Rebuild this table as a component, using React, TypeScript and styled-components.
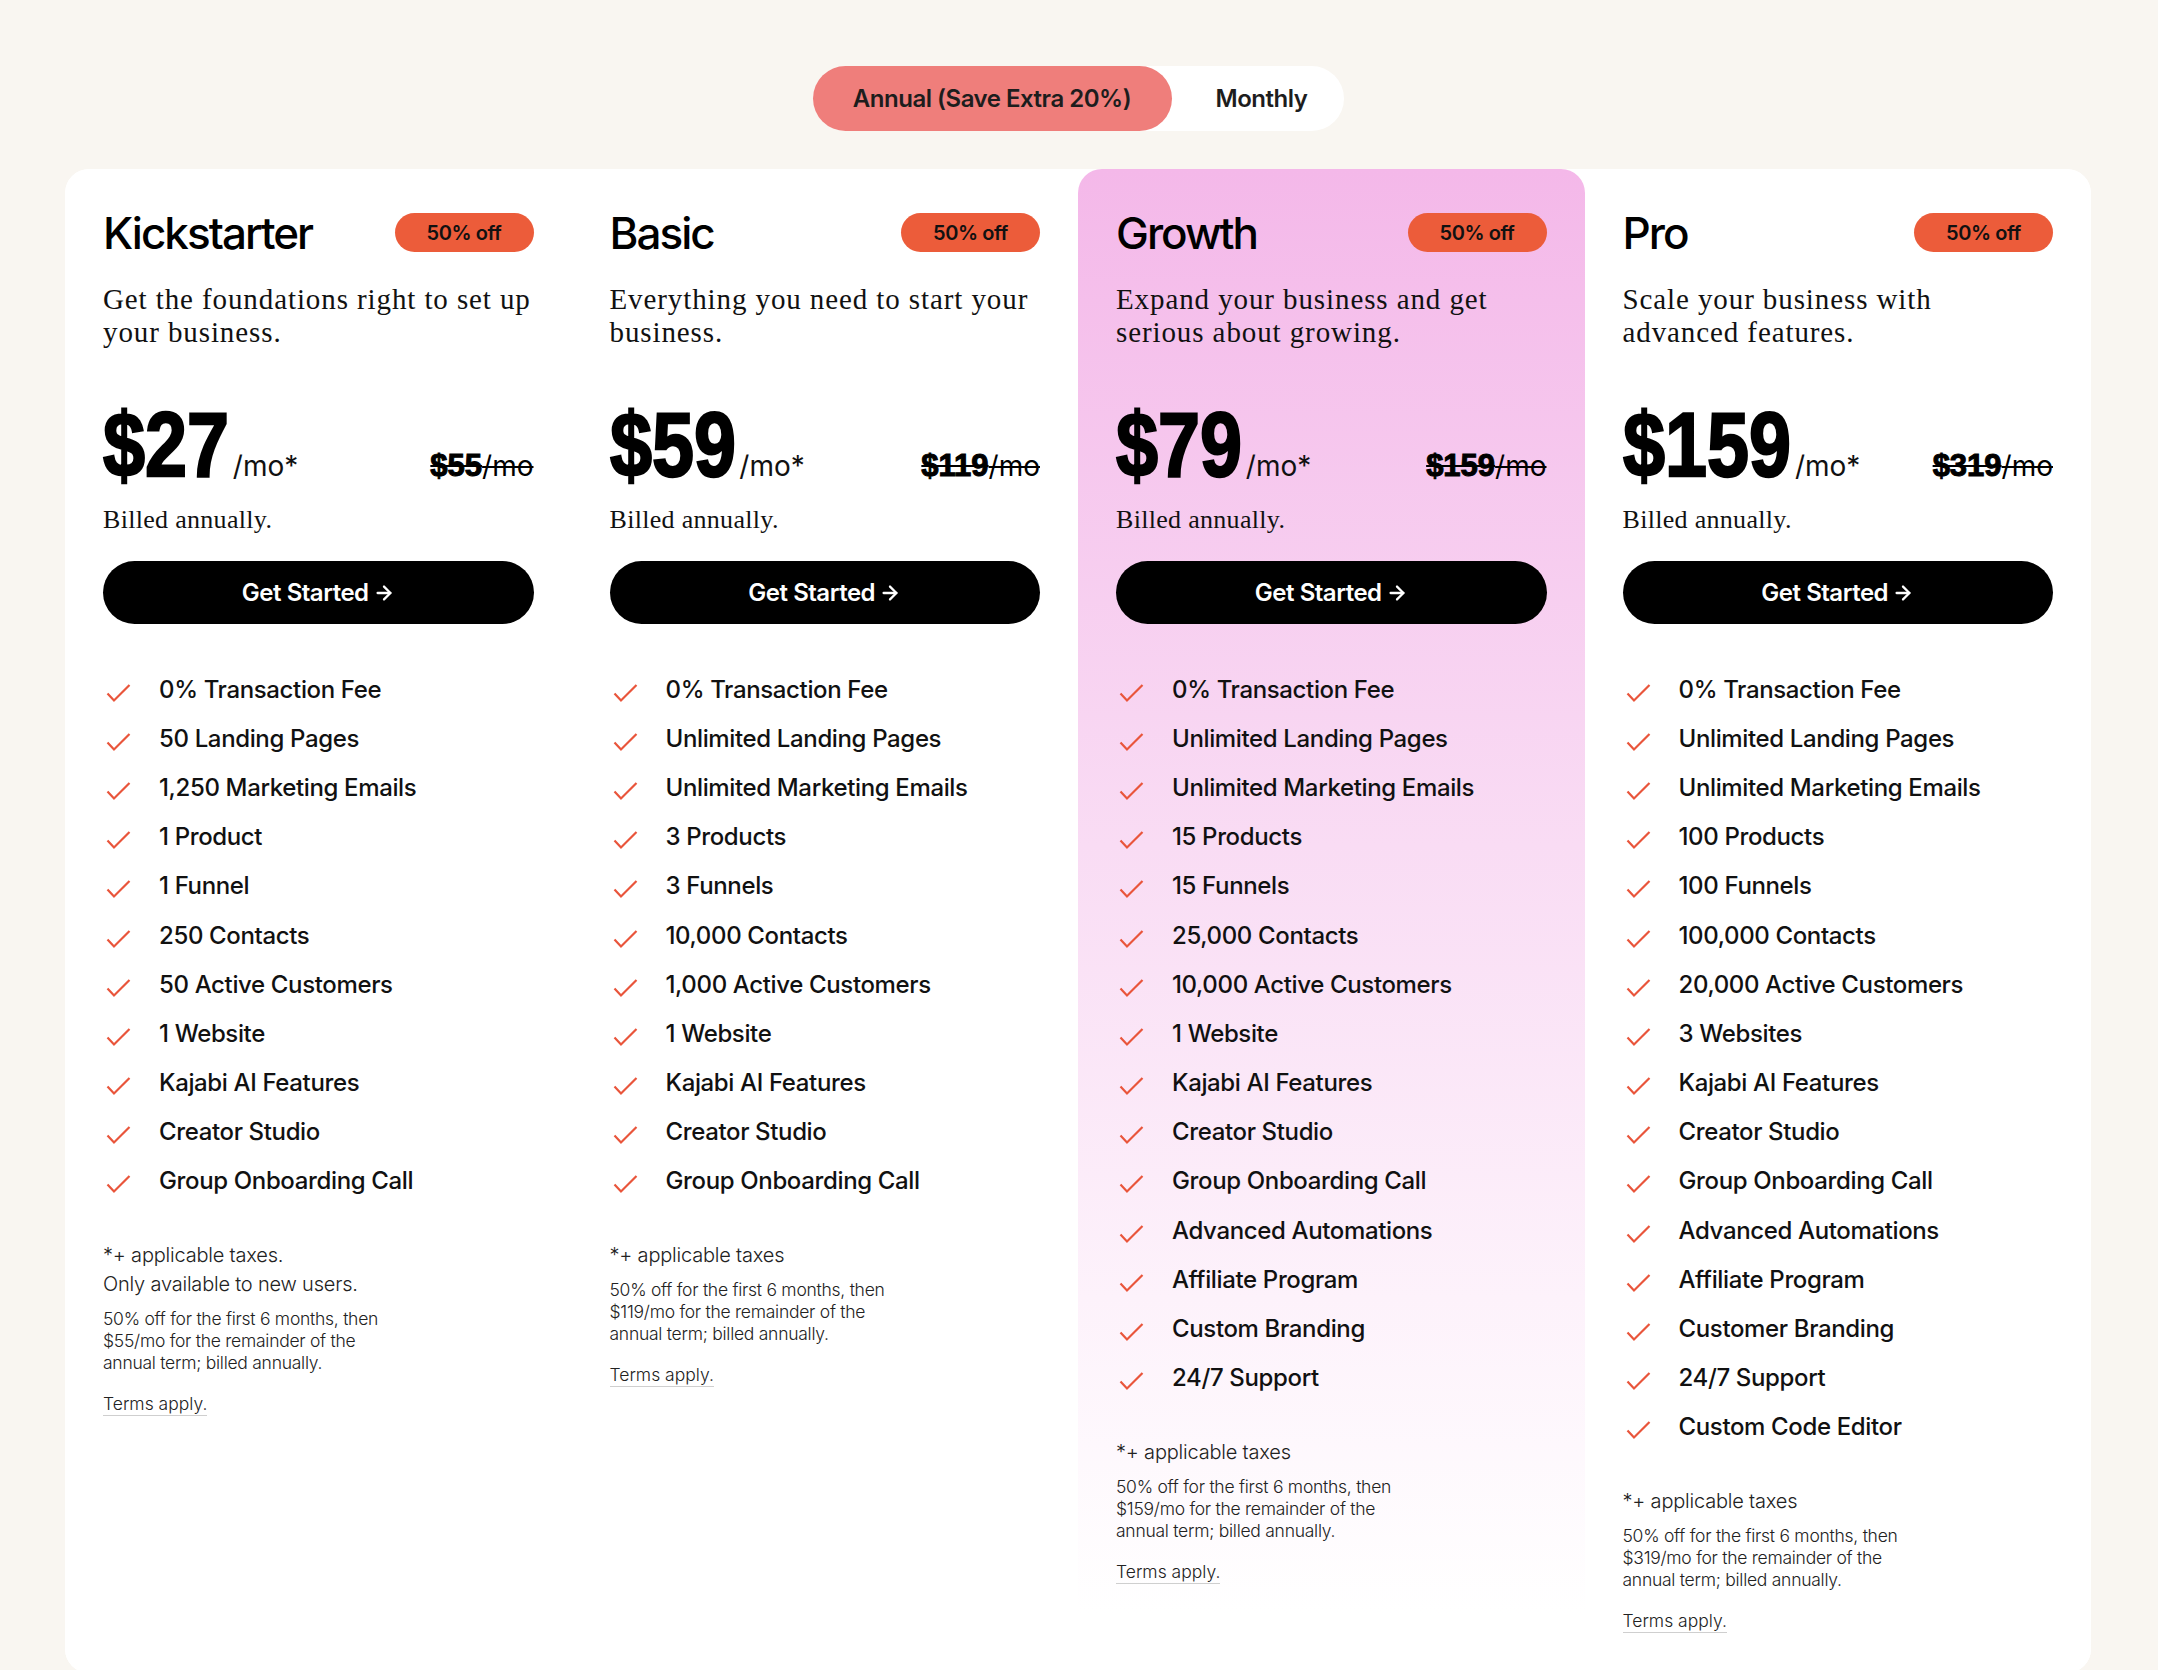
import React, { useState } from "react";
import styled, { createGlobalStyle } from "styled-components";
import { ArrowRight } from "lucide-react";

const GlobalStyle = createGlobalStyle`
  html, body {
    margin: 0;
    padding: 0;
    background: #f9f6f1;
  }
  * {
    box-sizing: border-box;
  }
`;

type Plan = {
    name: string;
    description: string;
    price: string;
    oldPrice: string;
    features: string[];
    taxes: string;
    newUsers?: boolean;
    highlight?: boolean;
};

const common = ["0% Transaction Fee", "Unlimited Landing Pages", "Unlimited Marketing Emails"];
const extras = ["Kajabi AI Features", "Creator Studio", "Group Onboarding Call"];

const plans: Plan[] = [
    {
        name: "Kickstarter",
        description: "Get the foundations right to set up your business.",
        price: "$27",
        oldPrice: "$55",
        features: [
            "0% Transaction Fee",
            "50 Landing Pages",
            "1,250 Marketing Emails",
            "1 Product",
            "1 Funnel",
            "250 Contacts",
            "50 Active Customers",
            "1 Website",
            ...extras,
        ],
        taxes: "*+ applicable taxes.",
        newUsers: true,
    },
    {
        name: "Basic",
        description: "Everything you need to start your business.",
        price: "$59",
        oldPrice: "$119",
        features: [...common, "3 Products", "3 Funnels", "10,000 Contacts", "1,000 Active Customers", "1 Website", ...extras],
        taxes: "*+ applicable taxes",
    },
    {
        name: "Growth",
        description: "Expand your business and get serious about growing.",
        price: "$79",
        oldPrice: "$159",
        features: [
            ...common,
            "15 Products",
            "15 Funnels",
            "25,000 Contacts",
            "10,000 Active Customers",
            "1 Website",
            ...extras,
            "Advanced Automations",
            "Affiliate Program",
            "Custom Branding",
            "24/7 Support",
        ],
        taxes: "*+ applicable taxes",
        highlight: true,
    },
    {
        name: "Pro",
        description: "Scale your business with advanced features.",
        price: "$159",
        oldPrice: "$319",
        features: [
            ...common,
            "100 Products",
            "100 Funnels",
            "100,000 Contacts",
            "20,000 Active Customers",
            "3 Websites",
            ...extras,
            "Advanced Automations",
            "Affiliate Program",
            "Customer Branding",
            "24/7 Support",
            "Custom Code Editor",
        ],
        taxes: "*+ applicable taxes",
    },
];

function Check() {
    return (
        <CheckSvg viewBox="0 0 25 20" width="25" height="20">
            <path d="M1.5 10.5 L8 17.5 L23.5 2" fill="none" stroke="#e9553b" strokeWidth="2.2" />
        </CheckSvg>
    );
}

// price glyphs are all digits / "$", each 0.556em wide in Liberation Sans Bold
const PRICE_SIZE = 91;
const PRICE_SCALE = 0.83;

export default function App() {
    const [billing, setBilling] = useState<"annual" | "monthly">("annual");

    return (
        <Page>
            <GlobalStyle />
            <ToggleRow>
                <Toggle>
                    <ToggleOption active={billing === "annual"} wide onClick={() => setBilling("annual")}>
                        Annual (Save Extra 20%)
                    </ToggleOption>
                    <ToggleOption active={billing === "monthly"} onClick={() => setBilling("monthly")}>
                        Monthly
                    </ToggleOption>
                </Toggle>
            </ToggleRow>

            <Board>
                {plans.map((plan) => (
                    <Column key={plan.name} highlight={plan.highlight}>
                        <Header>
                            <PlanName>{plan.name}</PlanName>
                            <Badge>50% off</Badge>
                        </Header>
                        <Description>{plan.description}</Description>

                        <PriceRow>
                            <Price chars={plan.price.length}>{plan.price}</Price>
                            <PerMonth>/mo*</PerMonth>
                            <OldPrice>
                                <b>{plan.oldPrice}</b>/mo
                            </OldPrice>
                        </PriceRow>
                        <Billed>Billed annually.</Billed>

                        <StartButton>
                            Get Started <ArrowRight size={22} strokeWidth={2.5} />
                        </StartButton>

                        <FeatureList>
                            {plan.features.map((f) => (
                                <Feature key={f}>
                                    <Check />
                                    <span>{f}</span>
                                </Feature>
                            ))}
                        </FeatureList>

                        <Notes>
                            <NoteLine>{plan.taxes}</NoteLine>
                            {plan.newUsers && <NoteLine>Only available to new users.</NoteLine>}
                            <SmallPrint>
                                50% off for the first 6 months, then {plan.oldPrice}/mo for the remainder of the
                                annual term; billed annually.
                            </SmallPrint>
                            <Terms href="#">Terms apply.</Terms>
                        </Notes>
                    </Column>
                ))}
            </Board>
        </Page>
    );
}

const Page = styled.div`
    min-height: 100vh;
    background: #f9f6f1;
    padding: 66px 67px 5px 65px;
    font-family: Inter, "Noto Sans", sans-serif;
    color: #111;
`;

const ToggleRow = styled.div`
    display: flex;
    justify-content: center;
    margin-bottom: 38px;
`;

const Toggle = styled.div`
    display: flex;
    background: #fff;
    border-radius: 33px;
    height: 65px;
    width: 531px;
`;

const ToggleOption = styled.button<{ active?: boolean; wide?: boolean }>`
    flex: ${({ wide }) => (wide ? "0 0 359px" : "1")};
    border: none;
    border-radius: 33px;
    background: ${({ active }) => (active ? "#ef7e7b" : "transparent")};
    color: #1d1d1d;
    font-family: Inter, sans-serif;
    font-size: 24px;
    font-weight: 600;
    letter-spacing: -0.02em;
    cursor: pointer;
    padding: 0 0 0 ${({ wide }) => (wide ? "0" : "8px")};
`;

const Board = styled.div`
    display: grid;
    grid-template-columns: repeat(4, 1fr);
    background: #fff;
    border-radius: 24px;
    overflow: hidden;
`;

const Column = styled.div<{ highlight?: boolean }>`
    display: flex;
    flex-direction: column;
    padding: 44px 38px 40px;
    border-radius: 24px 24px 0 0;
    background: ${({ highlight }) =>
        highlight ? "linear-gradient(180deg, #f4b8e9 0%, #f9dcf4 45%, #fdf2fb 75%, #ffffff 96%)" : "#fff"};
`;

const Header = styled.div`
    display: flex;
    justify-content: space-between;
    align-items: center;
    height: 39px;
`;

const PlanName = styled.h2`
    margin: 0;
    font-family: Inter, sans-serif;
    font-size: 44px;
    font-weight: 500;
    letter-spacing: -0.045em;
    color: #000;
    line-height: 1;
`;

const Badge = styled.span`
    display: inline-flex;
    align-items: center;
    justify-content: center;
    width: 139px;
    height: 39px;
    border-radius: 20px;
    background: #ec5c3a;
    color: #111;
    font-size: 20px;
    font-weight: 600;
    letter-spacing: -0.02em;
`;

const Description = styled.p`
    margin: 31px 0 0;
    font-family: "Liberation Serif", "DejaVu Serif", serif;
    font-size: 29px;
    line-height: 33px;
    letter-spacing: 0.9px;
    color: #111;
`;

const PriceRow = styled.div`
    display: flex;
    align-items: baseline;
    margin-top: 50px;
    line-height: 1;
`;

const Price = styled.span<{ chars: number }>`
    display: inline-block;
    font-family: "Liberation Sans", Arial, sans-serif;
    font-weight: 700;
    font-size: ${PRICE_SIZE}px;
    color: #000;
    -webkit-text-stroke: 2.4px #000;
    transform: scaleX(${PRICE_SCALE});
    transform-origin: left bottom;
    margin-right: ${({ chars }) => -Math.round((1 - PRICE_SCALE) * chars * 0.556 * PRICE_SIZE)}px;
`;

const PerMonth = styled.span`
    margin-left: 4px;
    font-family: Inter, sans-serif;
    font-size: 28px;
    font-weight: 400;
    color: #111;
`;

const OldPrice = styled.s`
    margin-left: auto;
    font-family: Inter, sans-serif;
    font-size: 28px;
    font-weight: 400;
    color: #000;
    text-decoration-thickness: 2px;

    b {
        font-family: "Liberation Sans", Arial, sans-serif;
        font-weight: 700;
        font-size: 31px;
        -webkit-text-stroke: 1px #000;
    }
`;

const Billed = styled.p`
    margin: 13px 0 0;
    font-family: "Liberation Serif", "DejaVu Serif", serif;
    font-size: 26px;
    line-height: 33px;
    letter-spacing: 0.3px;
    color: #111;
`;

const StartButton = styled.button`
    display: flex;
    align-items: center;
    justify-content: center;
    gap: 4px;
    margin-top: 25px;
    height: 63px;
    width: 100%;
    border: none;
    border-radius: 32px;
    background: #000;
    color: #fff;
    font-family: Inter, sans-serif;
    font-size: 24px;
    font-weight: 600;
    letter-spacing: -0.02em;
    cursor: pointer;
`;

const FeatureList = styled.ul`
    list-style: none;
    margin: 41px 0 0;
    padding: 0;
`;

const Feature = styled.li`
    display: flex;
    align-items: center;
    height: 49.2px;
    font-size: 24px;
    line-height: 30px;
    font-weight: 500;
    letter-spacing: -0.015em;
    color: #111;
`;

const CheckSvg = styled.svg`
    flex: none;
    margin: 6px 28px 0 3px;
`;

const Notes = styled.div`
    display: flex;
    flex-direction: column;
    align-items: flex-start;
    margin-top: 35px;
`;

const NoteLine = styled.div`
    font-size: 20px;
    font-weight: 300;
    line-height: 29px;
    color: #222;
    letter-spacing: -0.01em;
`;

const SmallPrint = styled.p`
    margin: 9px 0 0;
    max-width: 292px;
    font-size: 17.5px;
    font-weight: 300;
    line-height: 22px;
    color: #222;
    letter-spacing: -0.015em;
`;

const Terms = styled.a`
    margin-top: 19px;
    font-size: 17.5px;
    font-weight: 300;
    line-height: 22px;
    color: #222;
    text-decoration: none;
    border-bottom: 1px solid #cfcfcf;
`;
